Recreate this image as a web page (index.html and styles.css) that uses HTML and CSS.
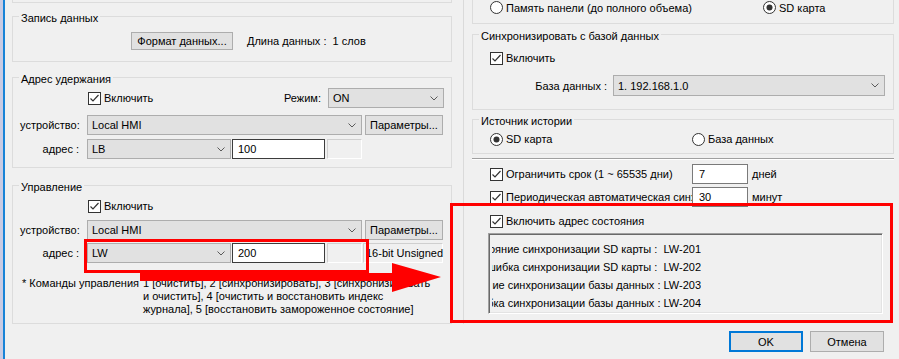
FILE: index.html
```html
<!DOCTYPE html>
<html lang="ru">
<head>
    <meta charset="UTF-8">
    <meta name="viewport" content="width=device-width, initial-scale=1.0">
    <title>Синхронизация SD карты</title>
    <link rel="stylesheet" href="styles.css">
</head>
<body>
<div class="desktop">
    <div class="dialog">
        <div class="columns">
            <div class="col col-left">
                <div class="stub"></div>

                <fieldset class="group g-record">
                    <legend>Запись данных</legend>
                    <div class="row r-format">
                        <button class="btn btn-format" type="button">Формат данных...</button>
                        <span class="data-len">Длина данных :&nbsp; 1 слов</span>
                    </div>
                </fieldset>

                <fieldset class="group g-hold">
                    <legend>Адрес удержания</legend>
                    <div class="row r-enable">
                        <label class="check">
                            <svg class="box" width="13" height="13" viewBox="0 0 13 13"><rect x="0.5" y="0.5" width="12" height="12"/><path d="M2.5 6.5 L5 9 L10.5 3"/></svg>
                            <span>Включить</span>
                        </label>
                        <div class="mode">
                            <span>Режим:</span>
                            <div class="combo w-mode"><span>ON</span><svg class="chev" width="8" height="5" viewBox="0 0 8 5"><path d="M0.5 0.5 L4 4 L7.5 0.5"/></svg></div>
                        </div>
                    </div>
                    <div class="row r-device">
                        <span class="lbl">устройство:</span>
                        <div class="combo w-device"><span>Local HMI</span><svg class="chev" width="8" height="5" viewBox="0 0 8 5"><path d="M0.5 0.5 L4 4 L7.5 0.5"/></svg></div>
                        <button class="btn btn-params" type="button">Параметры...</button>
                    </div>
                    <div class="row r-addr">
                        <span class="lbl lbl-right">адрес :</span>
                        <div class="combo w-addr"><span>LB</span><svg class="chev" width="8" height="5" viewBox="0 0 8 5"><path d="M0.5 0.5 L4 4 L7.5 0.5"/></svg></div>
                        <div class="field field-addr">100</div>
                        <div class="readout"></div>
                    </div>
                </fieldset>

                <fieldset class="group g-control">
                    <legend>Управление</legend>
                    <div class="row r-enable">
                        <label class="check">
                            <svg class="box" width="13" height="13" viewBox="0 0 13 13"><rect x="0.5" y="0.5" width="12" height="12"/><path d="M2.5 6.5 L5 9 L10.5 3"/></svg>
                            <span>Включить</span>
                        </label>
                    </div>
                    <div class="row r-device">
                        <span class="lbl">устройство:</span>
                        <div class="combo w-device"><span>Local HMI</span><svg class="chev" width="8" height="5" viewBox="0 0 8 5"><path d="M0.5 0.5 L4 4 L7.5 0.5"/></svg></div>
                        <button class="btn btn-params" type="button">Параметры...</button>
                    </div>
                    <div class="row r-addr">
                        <span class="lbl lbl-right">адрес :</span>
                        <div class="combo w-addr"><span>LW</span><svg class="chev" width="8" height="5" viewBox="0 0 8 5"><path d="M0.5 0.5 L4 4 L7.5 0.5"/></svg></div>
                        <div class="field field-addr">200</div>
                        <div class="readout"></div>
                        <div class="readout readout-type">16-bit Unsigned</div>
                    </div>
                    <div class="note">
                        <span class="note-head">* Команды управления</span>
                        <p class="note-body">1 [очистить], 2 [синхронизировать], 3 [синхронизировать<br>и очистить], 4 [очистить и восстановить индекс<br>журнала], 5 [восстановить замороженное состояние]</p>
                    </div>
                </fieldset>
            </div>

            <div class="divider"></div>

            <div class="col col-right">
                <div class="stub stub-right">
                    <div class="row radios r-storage">
                        <label class="radio w-first">
                            <svg class="dot" width="13" height="13" viewBox="0 0 13 13"><circle cx="6.5" cy="6.5" r="6"/></svg>
                            <span>Память панели (до полного объема)</span>
                        </label>
                        <label class="radio on">
                            <svg class="dot" width="13" height="13" viewBox="0 0 13 13"><circle cx="6.5" cy="6.5" r="6"/><circle class="pip" cx="6.5" cy="6.5" r="3"/></svg>
                            <span>SD карта</span>
                        </label>
                    </div>
                </div>

                <fieldset class="group g-sync">
                    <legend>Синхронизировать с базой данных</legend>
                    <div class="row r-check">
                        <label class="check">
                            <svg class="box" width="13" height="13" viewBox="0 0 13 13"><rect x="0.5" y="0.5" width="12" height="12"/><path d="M2.5 6.5 L5 9 L10.5 3"/></svg>
                            <span>Включить</span>
                        </label>
                    </div>
                    <div class="row r-db">
                        <span class="lbl-db">База данных :</span>
                        <div class="combo w-db"><span>1. 192.168.1.0</span><svg class="chev" width="8" height="5" viewBox="0 0 8 5"><path d="M0.5 0.5 L4 4 L7.5 0.5"/></svg></div>
                    </div>
                </fieldset>

                <fieldset class="group g-source">
                    <legend>Источник истории</legend>
                    <div class="row radios r-source">
                        <label class="radio on w-second">
                            <svg class="dot" width="13" height="13" viewBox="0 0 13 13"><circle cx="6.5" cy="6.5" r="6"/><circle class="pip" cx="6.5" cy="6.5" r="3"/></svg>
                            <span>SD карта</span>
                        </label>
                        <label class="radio">
                            <svg class="dot" width="13" height="13" viewBox="0 0 13 13"><circle cx="6.5" cy="6.5" r="6"/></svg>
                            <span>База данных</span>
                        </label>
                    </div>
                </fieldset>

                <div class="sep"></div>

                <div class="row opt-row r-limit">
                    <label class="check opt-check">
                        <svg class="box" width="13" height="13" viewBox="0 0 13 13"><rect x="0.5" y="0.5" width="12" height="12"/><path d="M2.5 6.5 L5 9 L10.5 3"/></svg>
                        <span>Ограничить срок (1 ~ 65535 дни)</span>
                    </label>
                    <div class="field field-num">7</div>
                    <span class="unit">дней</span>
                </div>
                <div class="row opt-row r-period">
                    <label class="check opt-check">
                        <svg class="box" width="13" height="13" viewBox="0 0 13 13"><rect x="0.5" y="0.5" width="12" height="12"/><path d="M2.5 6.5 L5 9 L10.5 3"/></svg>
                        <span>Периодическая автоматическая синхронизация</span>
                    </label>
                    <div class="field field-num">30</div>
                    <span class="unit">минут</span>
                </div>
                <div class="row opt-row r-status">
                    <label class="check">
                        <svg class="box" width="13" height="13" viewBox="0 0 13 13"><rect x="0.5" y="0.5" width="12" height="12"/><path d="M2.5 6.5 L5 9 L10.5 3"/></svg>
                        <span>Включить адрес состояния</span>
                    </label>
                </div>

                <div class="status-list">
                    <div class="lrow"><span>Состояние синхронизации SD карты :&nbsp; LW-201</span></div>
                    <div class="lrow"><span>Ошибка синхронизации SD карты :&nbsp; LW-202</span></div>
                    <div class="lrow"><span>Состояние синхронизации базы данных : LW-203</span></div>
                    <div class="lrow"><span>Ошибка синхронизации базы данных : LW-204</span></div>
                </div>
            </div>
        </div>

        <div class="footer">
            <button class="btn btn-ok" type="button">OK</button>
            <button class="btn btn-cancel" type="button">Отмена</button>
        </div>
    </div>
</div>

<!-- red annotation marks drawn over the dialog -->
<div class="mark mark-addr"></div>
<div class="mark mark-status"></div>
<svg class="arrow" width="899" height="359" viewBox="0 0 899 359">
    <polygon points="140,273 392,273 392,263 441,277 392,292 392,281 140,281"/>
</svg>
</body>
</html>
```

FILE: styles.css
```css
body {
    margin: 0;
    position: relative;
    background: #f0f0f0;
    color: #000;
    font-family: "Liberation Sans", Arial, sans-serif;
    font-size: 11px;
    overflow: hidden;
}

.desktop {
    height: 359px;
    padding-left: 3px;
    background: #c9cbe3;
}

.dialog {
    height: 100%;
    padding-left: 7px;
    background: #f0f0f0;
    border-left: 2px solid #1883d7;
}

.columns {
    display: flex;
}

.col-left {
    width: 440px;
}

.col-right {
    width: 422px;
}

.divider {
    width: 1px;
    margin: 0 8px 0 11px;
    background: #dadada;
}

.stub {
    height: 2px;
    border: 1px solid #dcdcdc;
    border-top: 0;
}

.stub-right {
    height: 23px;
}

/* group boxes */
.group {
    margin: 0;
    padding: 0;
    min-width: 0;
    border: 1px solid #dcdcdc;
}

.group legend {
    margin-left: 6px;
    padding: 4px 2px 0;
    line-height: 13px;
}

.row {
    display: flex;
    align-items: center;
    white-space: nowrap;
}

/* controls */
.btn {
    box-sizing: border-box;
    margin: 0;
    padding: 0;
    font: inherit;
    color: #000;
    background: #e1e1e1;
    border: 1px solid #adadad;
}

.combo {
    box-sizing: border-box;
    display: flex;
    align-items: center;
    justify-content: space-between;
    height: 20px;
    padding: 0 5px 0 4px;
    background: #e1e1e1;
    border: 1px solid #adadad;
}

.chev path {
    fill: none;
    stroke: #5a5a5a;
    stroke-width: 1;
}

.field {
    box-sizing: border-box;
    height: 20px;
    padding-left: 5px;
    line-height: 18px;
    background: #fff;
    border: 1px solid #7a7a7a;
}

.readout {
    box-sizing: border-box;
    height: 20px;
    width: 35px;
    margin-left: 2px;
    border: 1px solid;
    border-color: #cfcfcf #fff #fff #cfcfcf;
}

.readout-type {
    width: 80px;
    margin-left: 1px;
    padding-left: 2px;
    line-height: 18px;
}

.check,
.radio {
    display: flex;
    align-items: center;
}

.check .box {
    margin-right: 3px;
    flex: none;
}

.box rect {
    fill: #fff;
    stroke: #333;
}

.box path {
    fill: none;
    stroke: #333;
    stroke-width: 1.2;
}

.radio .dot {
    margin-right: 3px;
    flex: none;
}

.dot circle {
    fill: #fff;
    stroke: #333;
}

.dot .pip {
    fill: #333;
    stroke: none;
}

/* left column */
.g-record {
    margin-top: 5px;
    padding: 7px 0 11px;
}

.r-format {
    height: 18px;
    padding-left: 118px;
}

.btn-format {
    width: 102px;
    height: 18px;
}

.data-len {
    margin-left: 14px;
}

.g-hold {
    margin-top: 7px;
    padding: 2px 0 8px;
}

.g-control {
    margin-top: 9px;
    padding: 2px 0 7px;
}

.r-enable {
    height: 20px;
    padding-left: 75px;
}

.mode {
    display: flex;
    align-items: center;
    margin-left: auto;
    padding-right: 7px;
}

.w-mode {
    width: 116px;
    margin-left: 7px;
}

.lbl {
    box-sizing: border-box;
    width: 67px;
    margin-left: 7px;
}

.lbl-right {
    padding-right: 8px;
    text-align: right;
}

.r-device {
    height: 20px;
}

.g-hold .r-device {
    margin-top: 7px;
}

.g-control .r-device {
    margin-top: 4px;
}

.w-device {
    width: 275px;
}

.btn-params {
    width: 78px;
    height: 20px;
    margin-left: 3px;
}

.r-addr {
    height: 20px;
}

.g-hold .r-addr {
    margin-top: 4px;
}

.g-control .r-addr {
    margin-top: 3px;
}

.w-addr {
    width: 144px;
}

.field-addr {
    width: 93px;
    margin-left: 1px;
    border-color: #3c3c3c;
}

.note {
    display: flex;
    margin-top: 14px;
    padding-left: 9px;
    line-height: 13px;
}

.note-head {
    width: 121px;
    flex: none;
}

.note-body {
    margin: 0;
    white-space: nowrap;
}

/* right column */
.radios {
    padding-left: 17px;
}

.r-storage {
    height: 15px;
}

.w-first {
    width: 273px;
}

.g-sync {
    margin-top: 2px;
    padding: 5px 0 13px;
}

.r-check {
    height: 20px;
    padding-left: 17px;
}

.r-db {
    height: 21px;
    margin-top: 7px;
}

.lbl-db {
    width: 134px;
    margin-right: 6px;
    text-align: right;
}

.w-db {
    width: 272px;
    height: 21px;
}

.g-source {
    margin-top: 1px;
    padding: 3px 0 6px;
}

.r-source {
    height: 16px;
}

.w-second {
    width: 202px;
}

.sep {
    margin-top: 4px;
    border-top: 1px solid #a0a0a0;
    border-bottom: 1px solid #fff;
}

.opt-row {
    height: 20px;
    padding-left: 18px;
}

.r-limit {
    margin-top: 4px;
}

.r-period {
    margin-top: 3px;
}

.r-status {
    height: 16px;
    margin-top: 6px;
}

.opt-check {
    width: 202px;
    overflow: hidden;
}

.field-num {
    width: 56px;
    padding-left: 6px;
}

.unit {
    margin-left: 4px;
}

.status-list {
    box-sizing: border-box;
    width: 395px;
    height: 81px;
    margin: 4px 0 0 16px;
    padding-top: 6px;
    border: 1px solid;
    border-color: #a0a0a0 #fff #fff #a0a0a0;
    box-shadow: inset 1px 1px 0 #696969, inset -1px -1px 0 #e3e3e3;
}

.lrow {
    display: flex;
    justify-content: flex-end;
    width: 209px;
    height: 18px;
    margin-left: 3px;
    overflow: hidden;
    line-height: 18px;
    white-space: nowrap;
}

.lrow span {
    flex: none;
}

/* dialog buttons */
.footer {
    display: flex;
    justify-content: flex-end;
    gap: 7px;
    margin-top: 7px;
    padding-right: 15px;
}

.footer .btn {
    width: 74px;
    height: 21px;
}

.btn-ok {
    border: 2px solid #0078d7;
}

/* annotation */
.mark {
    position: absolute;
    box-sizing: border-box;
    border: 3px solid #f00;
}

.mark-addr {
    left: 84px;
    top: 239px;
    width: 285px;
    height: 34px;
}

.mark-status {
    left: 450px;
    top: 203px;
    width: 443px;
    height: 120px;
}

.arrow {
    position: absolute;
    left: 0;
    top: 0;
    pointer-events: none;
}

.arrow polygon {
    fill: #f00;
}
```
